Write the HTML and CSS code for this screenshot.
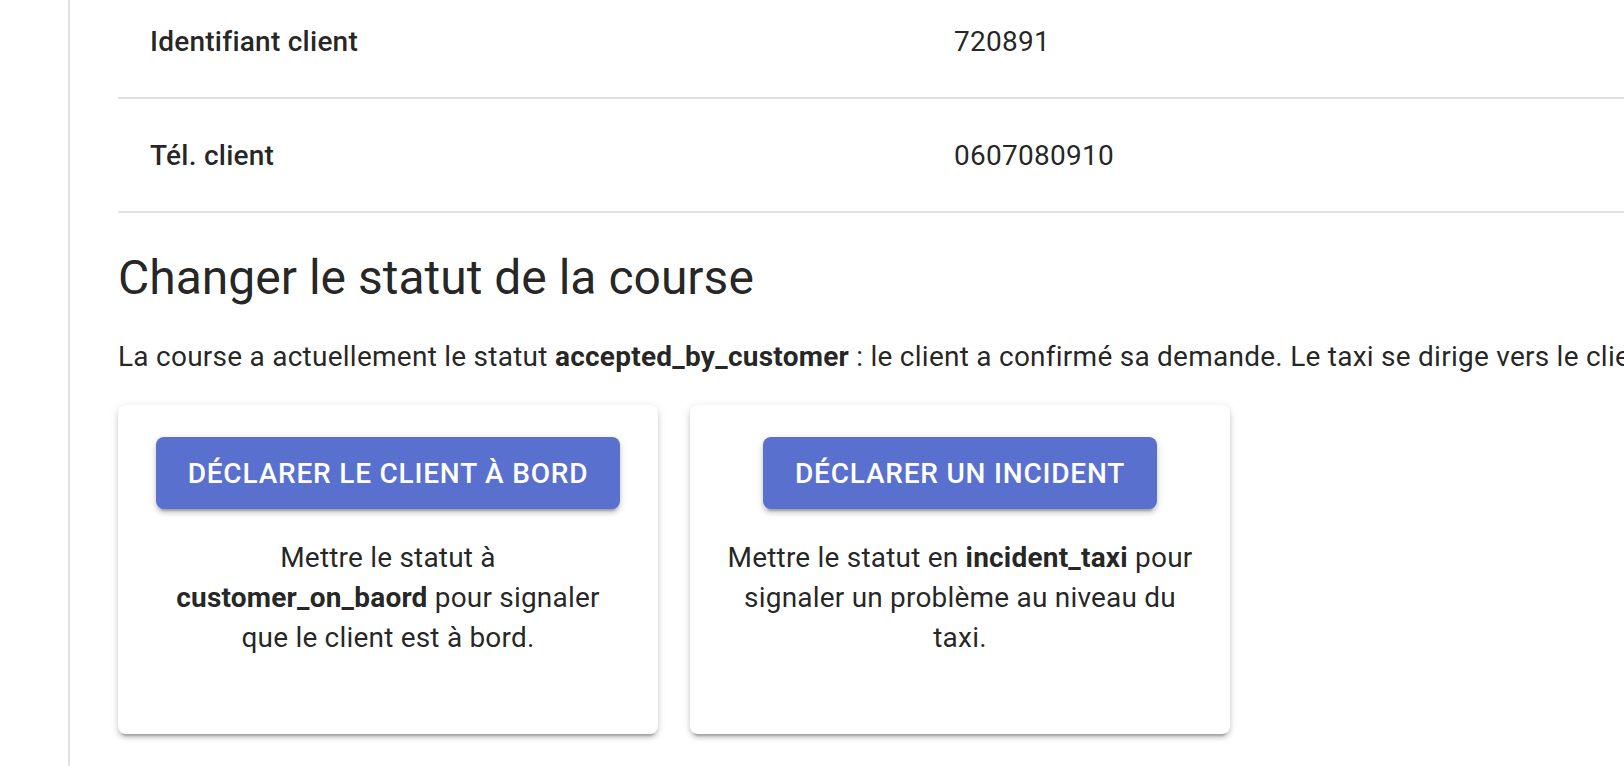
FILE: index.html
```html
<!DOCTYPE html>
<html lang="fr">
<head>
<meta charset="utf-8">
<title>Course</title>
<link rel="stylesheet" href="styles.css">
</head>
<body>
<div class="app">
  <aside class="rail"></aside>
  <main class="content">
    <div class="info">
      <div class="row">
        <div class="label">Identifiant client</div>
        <div class="value">720891</div>
      </div>
      <div class="row">
        <div class="label">Tél. client</div>
        <div class="value">0607080910</div>
      </div>
    </div>
    <h2 class="title">Changer le statut de la course</h2>
    <p class="status">La course a actuellement le statut <strong>accepted_by_customer</strong> : le client a confirmé sa demande. Le taxi se dirige vers le client.</p>
    <div class="cards">
      <div class="card">
        <button class="btn">Déclarer le client à bord</button>
        <p class="card-text">Mettre le statut à <strong>customer_on_baord</strong> pour signaler que le client est à bord.</p>
      </div>
      <div class="card">
        <button class="btn">Déclarer un incident</button>
        <p class="card-text">Mettre le statut en <strong>incident_taxi</strong> pour signaler un problème au niveau du taxi.</p>
      </div>
    </div>
  </main>
</div>
</body>
</html>
```
FILE: styles.css
```css
html, body {
  margin: 0;
  padding: 0;
  height: 100%;
  overflow: hidden;
  background: #ffffff;
}
body {
  font-family: Roboto, "Noto Sans", "Liberation Sans", sans-serif;
  color: rgba(0, 0, 0, 0.87);
}
.app {
  display: flex;
  height: 766px;
}
.rail {
  flex: none;
  width: 68px;
  border-right: 2px solid #e0e0e0;
}
.content {
  flex: none;
  width: 1608px;
  padding-left: 48px;
  margin-top: -15px;
}
.row {
  display: grid;
  grid-template-columns: 804px 1fr;
  align-items: center;
  height: 112px;
  border-bottom: 2px solid #e0e0e0;
  font-size: 28px;
  letter-spacing: 0.25px;
}
.label, .value {
  padding: 0 32px;
}
.label {
  font-weight: 500;
}
.title {
  margin: 33px 0 0;
  font-size: 48px;
  line-height: 64px;
  font-weight: 400;
}
.status {
  margin: 27px 0 0;
  font-size: 28px;
  line-height: 40px;
  letter-spacing: 0.25px;
  white-space: nowrap;
}
.status strong, .card-text strong {
  font-weight: 700;
}
.cards {
  display: flex;
  gap: 32px;
  margin-top: 28px;
}
.card {
  box-sizing: border-box;
  width: 540px;
  height: 329px;
  padding: 32px 32px 0;
  display: flex;
  flex-direction: column;
  align-items: center;
  border-radius: 8px;
  background: #fff;
  box-shadow: 0 6px 2px -4px rgba(0,0,0,0.2), 0 4px 4px 0 rgba(0,0,0,0.14), 0 2px 10px 0 rgba(0,0,0,0.12);
}
.btn {
  height: 72px;
  padding: 0 32px;
  border: 0;
  border-radius: 8px;
  background: #5a70cf;
  color: #fff;
  font-family: Roboto, "Noto Sans", sans-serif;
  font-size: 28px;
  font-weight: 500;
  letter-spacing: 0.8px;
  white-space: nowrap;
  text-transform: uppercase;
  box-shadow: 0 6px 2px -4px rgba(0,0,0,0.2), 0 4px 4px 0 rgba(0,0,0,0.14), 0 2px 10px 0 rgba(0,0,0,0.12);
}
.card-text {
  width: 469px;
  margin: 29px 0 0;
  font-size: 28px;
  line-height: 40px;
  letter-spacing: 0.2px;
  text-align: center;
}
```
